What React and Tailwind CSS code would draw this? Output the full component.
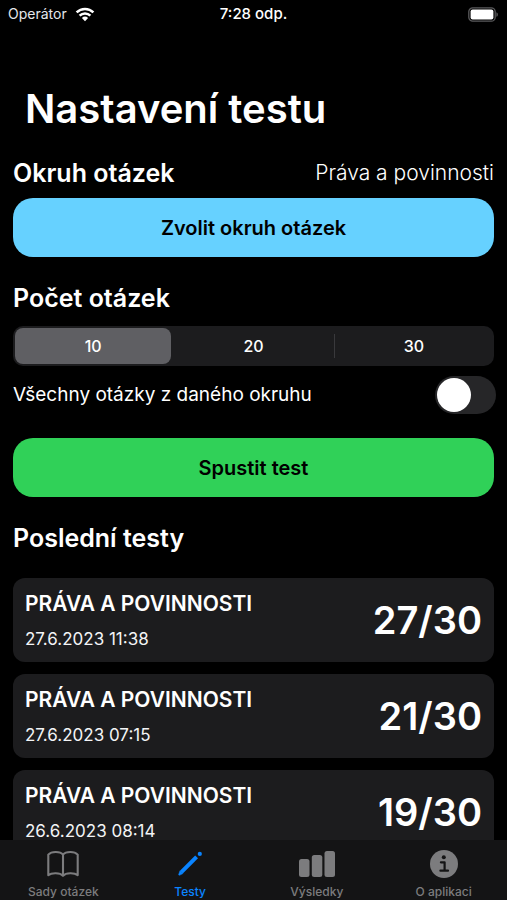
import { useState } from "react";

const tests = [
  { id: 1, name: "PRÁVA A POVINNOSTI", date: "27.6.2023 11:38", score: "27/30" },
  { id: 2, name: "PRÁVA A POVINNOSTI", date: "27.6.2023 07:15", score: "21/30" },
  { id: 3, name: "PRÁVA A POVINNOSTI", date: "26.6.2023 08:14", score: "19/30" },
];

const counts = [10, 20, 30];

const WifiIcon = () => (
  <svg width="20" height="15" viewBox="0 0 20 15" fill="none" aria-hidden="true">
    <path d="M1.6 5.4a12 12 0 0 1 16.8 0" stroke="#fff" strokeWidth="2.5" />
    <path d="M4.6 8.7a7.7 7.7 0 0 1 10.8 0" stroke="#fff" strokeWidth="2.4" />
    <path d="M10 14.2 6.9 11a4.5 4.5 0 0 1 6.2 0z" fill="#fff" />
  </svg>
);

const BatteryIcon = () => (
  <svg width="31" height="15" viewBox="0 0 31 15" fill="none" aria-hidden="true">
    <rect x="0.8" y="0.8" width="26.4" height="13.4" rx="4" stroke="#5a5a5c" strokeWidth="1.3" />
    <rect x="2.6" y="2.5" width="22.8" height="10" rx="2" fill="#fff" />
    <path d="M28.4 5.2c2 .8 2 3.8 0 4.6z" fill="#5a5a5c" />
  </svg>
);

const BookIcon = () => (
  <svg width="32" height="28" viewBox="0 0 32 28" fill="none" aria-hidden="true">
    <path
      d="M16 4.6C13.2 1.3 4.6 1 1.3 4.6V25.2C4.6 22.6 13 22.6 16 25.8C19 22.6 27.4 22.6 30.7 25.2V4.6C27.4 1 18.8 1.3 16 4.6ZM16 4.6V25.8"
      stroke="currentColor"
      strokeWidth="2.1"
      strokeLinejoin="round"
    />
  </svg>
);

const PencilIcon = () => (
  <svg width="28" height="28" viewBox="0 0 28 28" fill="none" aria-hidden="true">
    <path d="M20.6 6.8 5.4 22.2" stroke="currentColor" strokeWidth="4" />
    <path
      d="M4 20.8 2.8 24.2c-.3.8.2 1.2 1 .9L6.8 23.6z"
      fill="currentColor"
      stroke="currentColor"
      strokeWidth="0.6"
      strokeLinejoin="round"
    />
    <circle cx="23.8" cy="3.9" r="2.1" fill="currentColor" />
  </svg>
);

const BarsIcon = () => (
  <svg width="36" height="28" viewBox="0 0 36 28" fill="currentColor" aria-hidden="true">
    <rect x="0" y="9" width="10.5" height="18" rx="2.5" />
    <rect x="12.8" y="5" width="10.5" height="22" rx="2.5" />
    <rect x="25.5" y="1" width="10.5" height="26" rx="2.5" />
  </svg>
);

const InfoIcon = () => (
  <svg width="30" height="28" viewBox="0 0 30 28" aria-hidden="true">
    <circle cx="15" cy="14" r="14" fill="currentColor" />
    <circle cx="14.8" cy="7.2" r="2" fill="#141415" />
    <path
      d="M11.9 12.3h3.7v8.2M11.4 20.7h7.6"
      fill="none"
      stroke="#141415"
      strokeWidth="2.2"
      strokeLinecap="round"
      strokeLinejoin="round"
    />
  </svg>
);

const tabs = [
  { label: "Sady otázek", Icon: BookIcon },
  { label: "Testy", Icon: PencilIcon, active: true },
  { label: "Výsledky", Icon: BarsIcon },
  { label: "O aplikaci", Icon: InfoIcon },
];

const StatusBar = () => (
  <header className="grid h-7 shrink-0 grid-cols-3 items-center px-2">
    <div className="flex items-center gap-2 text-sm text-gray-200">
      Operátor <WifiIcon />
    </div>
    <p className="text-center text-[15px] font-medium">7:28 odp.</p>
    <div className="flex justify-end">
      <BatteryIcon />
    </div>
  </header>
);

const TestCard = ({ test }) => (
  <li className="flex items-center justify-between rounded-xl bg-[#1c1c1e] px-3 py-[7px]">
    <div>
      <h3 className="text-[21px] leading-[38px] font-semibold">{test.name}</h3>
      <p className="text-[17px] leading-8 text-gray-100">{test.date}</p>
    </div>
    <p className="text-[38px] font-semibold">{test.score}</p>
  </li>
);

const TabBar = () => (
  <nav className="grid h-[60px] shrink-0 grid-cols-4 bg-[#141415]">
    {tabs.map(({ label, Icon, active }) => (
      <a
        key={label}
        href="#"
        className={`flex flex-col items-center justify-end gap-1.5 text-xs font-medium ${
          active ? "text-[#0a84ff]" : "text-[#7c7c7e]"
        }`}
      >
        <Icon />
        {label}
      </a>
    ))}
  </nav>
);

const App = () => {
  const [count, setCount] = useState(10);
  const [allQuestions, setAllQuestions] = useState(false);

  return (
    <div className="flex h-screen flex-col bg-black font-['Inter',sans-serif] text-white">
      <StatusBar />
      <main className="min-h-0 flex-1 overflow-y-auto px-[13px] [scrollbar-width:none]">
        <h1 className="mt-14 px-3 text-[40px] leading-[50px] font-semibold">Nastavení testu</h1>

        <div className="mt-[22px] flex items-center justify-between">
          <h2 className="text-[25px] leading-8 font-semibold">Okruh otázek</h2>
          <p className="text-[21px] leading-[34px] font-light">Práva a povinnosti</p>
        </div>
        <button className="mt-2 h-[59px] w-full rounded-[20px] bg-[#66d1ff] text-xl font-semibold text-black">
          Zvolit okruh otázek
        </button>

        <h2 id="count-title" className="mt-[25px] text-[25px] leading-8 font-semibold">
          Počet otázek
        </h2>
        <fieldset
          aria-labelledby="count-title"
          className="mt-3 grid h-10 grid-cols-3 rounded-[10px] bg-[#1c1c1e]"
        >
          {counts.map((value, i) => (
            <label key={value} className="relative flex items-center p-0.5">
              <input
                type="radio"
                name="count"
                value={value}
                checked={count === value}
                onChange={() => setCount(value)}
                className="absolute inset-0 appearance-none"
              />
              {i > 0 && count !== value && count !== counts[i - 1] && (
                <span className="absolute left-0 h-6 w-px bg-[#39393c]" />
              )}
              <span
                className={`relative flex h-full flex-1 items-center justify-center rounded-lg text-base font-medium ${
                  count === value ? "bg-[#5f5f63]" : ""
                }`}
              >
                {value}
              </span>
            </label>
          ))}
        </fieldset>

        <div className="mt-2.5 -mr-0.5 flex items-center justify-between">
          <label htmlFor="all" className="text-[19px]">
            Všechny otázky z daného okruhu
          </label>
          <input
            id="all"
            type="checkbox"
            role="switch"
            checked={allQuestions}
            onChange={(e) => setAllQuestions(e.target.checked)}
            className="h-[38px] w-[61px] appearance-none rounded-full bg-[#262628] p-0.5 before:block before:size-[34px] before:rounded-full before:bg-white checked:bg-[#30d158] checked:before:ml-auto"
          />
        </div>
        <button className="mt-6 h-[59px] w-full rounded-[20px] bg-[#30d158] text-xl font-semibold text-black">
          Spustit test
        </button>

        <h2 className="mt-[25px] text-[25px] leading-8 font-semibold">Poslední testy</h2>
        <ul className="mt-6 flex flex-col gap-3">
          {tests.map((test) => (
            <TestCard key={test.id} test={test} />
          ))}
        </ul>
      </main>
      <TabBar />
    </div>
  );
};

export default App;
